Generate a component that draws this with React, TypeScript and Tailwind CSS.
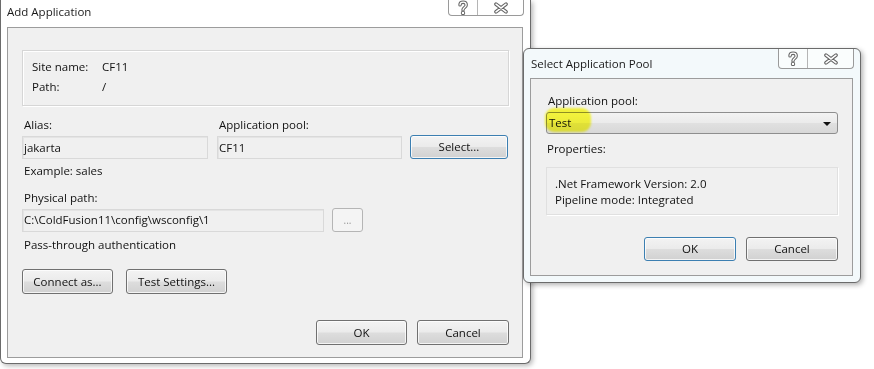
import React from "react";

const btnBase =
  "flex items-center justify-center rounded-[3px] border bg-[linear-gradient(to_bottom,#f3f3f3_0%,#ebebeb_48%,#dddddd_52%,#d1d1d1_100%)] shadow-[inset_0_0_0_1px_rgba(255,255,255,0.75)]";

function Btn({ w, h = 25, focused, children }: { w: number; h?: number; focused?: boolean; children: React.ReactNode }) {
  return (
    <div
      className={
        btnBase +
        (focused
          ? " border-[#3c7fb1] shadow-[inset_0_0_0_1px_#bfe3f5]"
          : " border-[#707070]")
      }
      style={{ width: w, height: h }}
    >
      {children}
    </div>
  );
}

function HelpIcon() {
  return (
    <svg width="12" height="15" viewBox="-6 -7.5 12 15">
      <g fill="none" strokeLinecap="round" strokeLinejoin="round">
        <path d="M-3 -2.6 C-3 -6.2 3.2 -6.2 3.2 -2.6 C3.2 0 0 0 0 2.4" stroke="#666" strokeWidth="3.4" />
        <circle cx="0" cy="5.4" r="0.5" stroke="#666" strokeWidth="3.4" />
        <path d="M-3 -2.6 C-3 -6.2 3.2 -6.2 3.2 -2.6 C3.2 0 0 0 0 2.4" stroke="#ffffff" strokeWidth="1.3" />
        <circle cx="0" cy="5.4" r="0.5" stroke="#ffffff" strokeWidth="1.3" />
      </g>
    </svg>
  );
}

function CloseIcon() {
  return (
    <svg width="16" height="12" viewBox="-8 -6 16 12">
      <g fill="none" strokeLinecap="round">
        <path d="M-5 -3.8 L5 3.8 M-5 3.8 L5 -3.8" stroke="#666" strokeWidth="3.6" />
        <path d="M-5 -3.8 L5 3.8 M-5 3.8 L5 -3.8" stroke="#ffffff" strokeWidth="1.5" />
      </g>
    </svg>
  );
}

function Caption({ h }: { h: number }) {
  return (
    <div
      className="absolute right-[6px] top-0 flex border-x border-b border-[#9a9a9a] rounded-b-[4px] bg-white/60"
      style={{ height: h }}
    >
      <div className="w-[29px] flex items-center justify-center border-r border-[#b5b5b5]">
        <HelpIcon />
      </div>
      <div className="w-[45px] flex items-center justify-center">
        <CloseIcon />
      </div>
    </div>
  );
}

function TextBox({ w, children }: { w: number; children?: React.ReactNode }) {
  return (
    <div
      className="h-[23px] border border-[#d9d9d9] bg-[#f0f0f0] shadow-[inset_1px_1px_0_#e4e4e4] flex items-center pl-[1px]"
      style={{ width: w }}
    >
      {children}
    </div>
  );
}

function AddApplication() {
  return (
    <div className="absolute left-0 top-0 w-[531px] h-[364px] bg-white border-x border-b border-[#6b6b6b] rounded-b-[6px] shadow-[2px_2px_5px_rgba(0,0,0,0.28)] flex flex-col">
      <div className="relative h-[27px] flex items-center pl-[6px] text-[#1a1a1a]">
        <span className="-mt-[3px]">Add Application</span>
        <Caption h={16} />
      </div>
      <div className="ml-[6px] mr-[7px] mb-[5px] flex-1 border border-[#9c9c9c] bg-[#f0f0f0] pl-[14px] pr-[13px] flex flex-col">
        <div className="mt-[22px] h-[56px] border border-[#d6d6d6] shadow-[inset_1px_1px_0_#ffffff,1px_1px_0_#ffffff] pl-[9px] pt-[8px] flex flex-col gap-[4px]">
          <div className="flex">
            <span className="w-[70px]">Site name:</span>
            <span>CF11</span>
          </div>
          <div className="flex">
            <span className="w-[70px]">Path:</span>
            <span>/</span>
          </div>
        </div>

        <div className="mt-[11px] flex">
          <div className="w-[186px] flex flex-col">
            <span className="pl-[2px]">Alias:</span>
            <div className="mt-[3px]">
              <TextBox w={186}>jakarta</TextBox>
            </div>
          </div>
          <div className="ml-[9px] w-[185px] flex flex-col">
            <span className="pl-[2px]">Application pool:</span>
            <div className="mt-[3px]">
              <TextBox w={185}>CF11</TextBox>
            </div>
          </div>
          <div className="ml-[8px] flex flex-col justify-end">
            <Btn w={98} h={24} focused>
              Select...
            </Btn>
          </div>
        </div>

        <span className="mt-[4px] pl-[2px]">Example: sales</span>
        <span className="mt-[11px] pl-[2px]">Physical path:</span>
        <div className="mt-[2px] flex items-center">
          <TextBox w={302}>C:\ColdFusion11\config\wsconfig\1</TextBox>
          <div className="ml-[8px] w-[31px] h-[24px] rounded-[3px] border border-[#b5b5b5] bg-[#f4f4f4] flex items-center justify-center text-[#9a9a9a] text-[10px]">
            ...
          </div>
        </div>
        <span className="mt-[5px] pl-[2px]">Pass-through authentication</span>

        <div className="mt-[16px] flex gap-[13px]">
          <Btn w={91}>Connect as...</Btn>
          <Btn w={101}>Test Settings...</Btn>
        </div>

        <div className="mt-[26px] flex justify-end gap-[10px] pr-[0px]">
          <Btn w={91}>OK</Btn>
          <Btn w={92}>Cancel</Btn>
        </div>
      </div>
    </div>
  );
}

function SelectPool() {
  return (
    <div className="absolute left-[523px] top-[48px] w-[338px] h-[235px] bg-[#f3f9fb] border border-[#6b6b6b] rounded-[6px] shadow-[2px_2px_5px_rgba(0,0,0,0.3)] flex flex-col">
      <div className="relative h-[29px] flex items-center pl-[7px] text-[#1a1a1a]">
        <span>Select Application Pool</span>
        <Caption h={20} />
      </div>
      <div className="ml-[6px] mr-[7px] mb-[6px] flex-1 border border-[#9c9c9c] bg-[#f0f0f0] pl-[15px] pr-[14px] flex flex-col">
        <span className="mt-[14px] pl-[2px]">Application pool:</span>
        <div className="relative mt-[3px] h-[22px] rounded-[3px] border border-[#8e8e8e] bg-[linear-gradient(to_bottom,#f3f3f3_0%,#ebebeb_48%,#e0e0e0_52%,#d8d8d8_100%)] flex items-center pl-[2px]">
          <span className="relative">Test</span>
          <span className="absolute -left-[2px] -top-[5px] w-[46px] h-[24px] rounded-[9px] bg-[#ffff2a] opacity-90 mix-blend-multiply blur-[1px]" />
          <svg className="absolute right-[6px] top-[9px]" width="8" height="4" viewBox="0 0 8 4">
            <polygon points="0,0 8,0 4,4" fill="#111" />
          </svg>
        </div>
        <span className="mt-[7px] pl-[1px]">Properties:</span>
        <div className="mt-[10px] h-[48px] border border-[#e0e0e0] shadow-[1px_1px_0_#ffffff] pl-[8px] pt-[8px] flex flex-col">
          <span>.Net Framework Version: 2.0</span>
          <span>Pipeline mode: Integrated</span>
        </div>
        <div className="mt-[22px] flex justify-end gap-[10px]">
          <Btn w={92} h={24} focused>
            OK
          </Btn>
          <Btn w={92} h={24}>
            Cancel
          </Btn>
        </div>
      </div>
    </div>
  );
}

export default function App() {
  return (
    <div className="relative w-[874px] h-[369px] overflow-hidden bg-white font-['Open_Sans','Noto_Sans',sans-serif] text-[11.5px] leading-[16px] text-[#111]">
      <AddApplication />
      <SelectPool />
    </div>
  );
}
